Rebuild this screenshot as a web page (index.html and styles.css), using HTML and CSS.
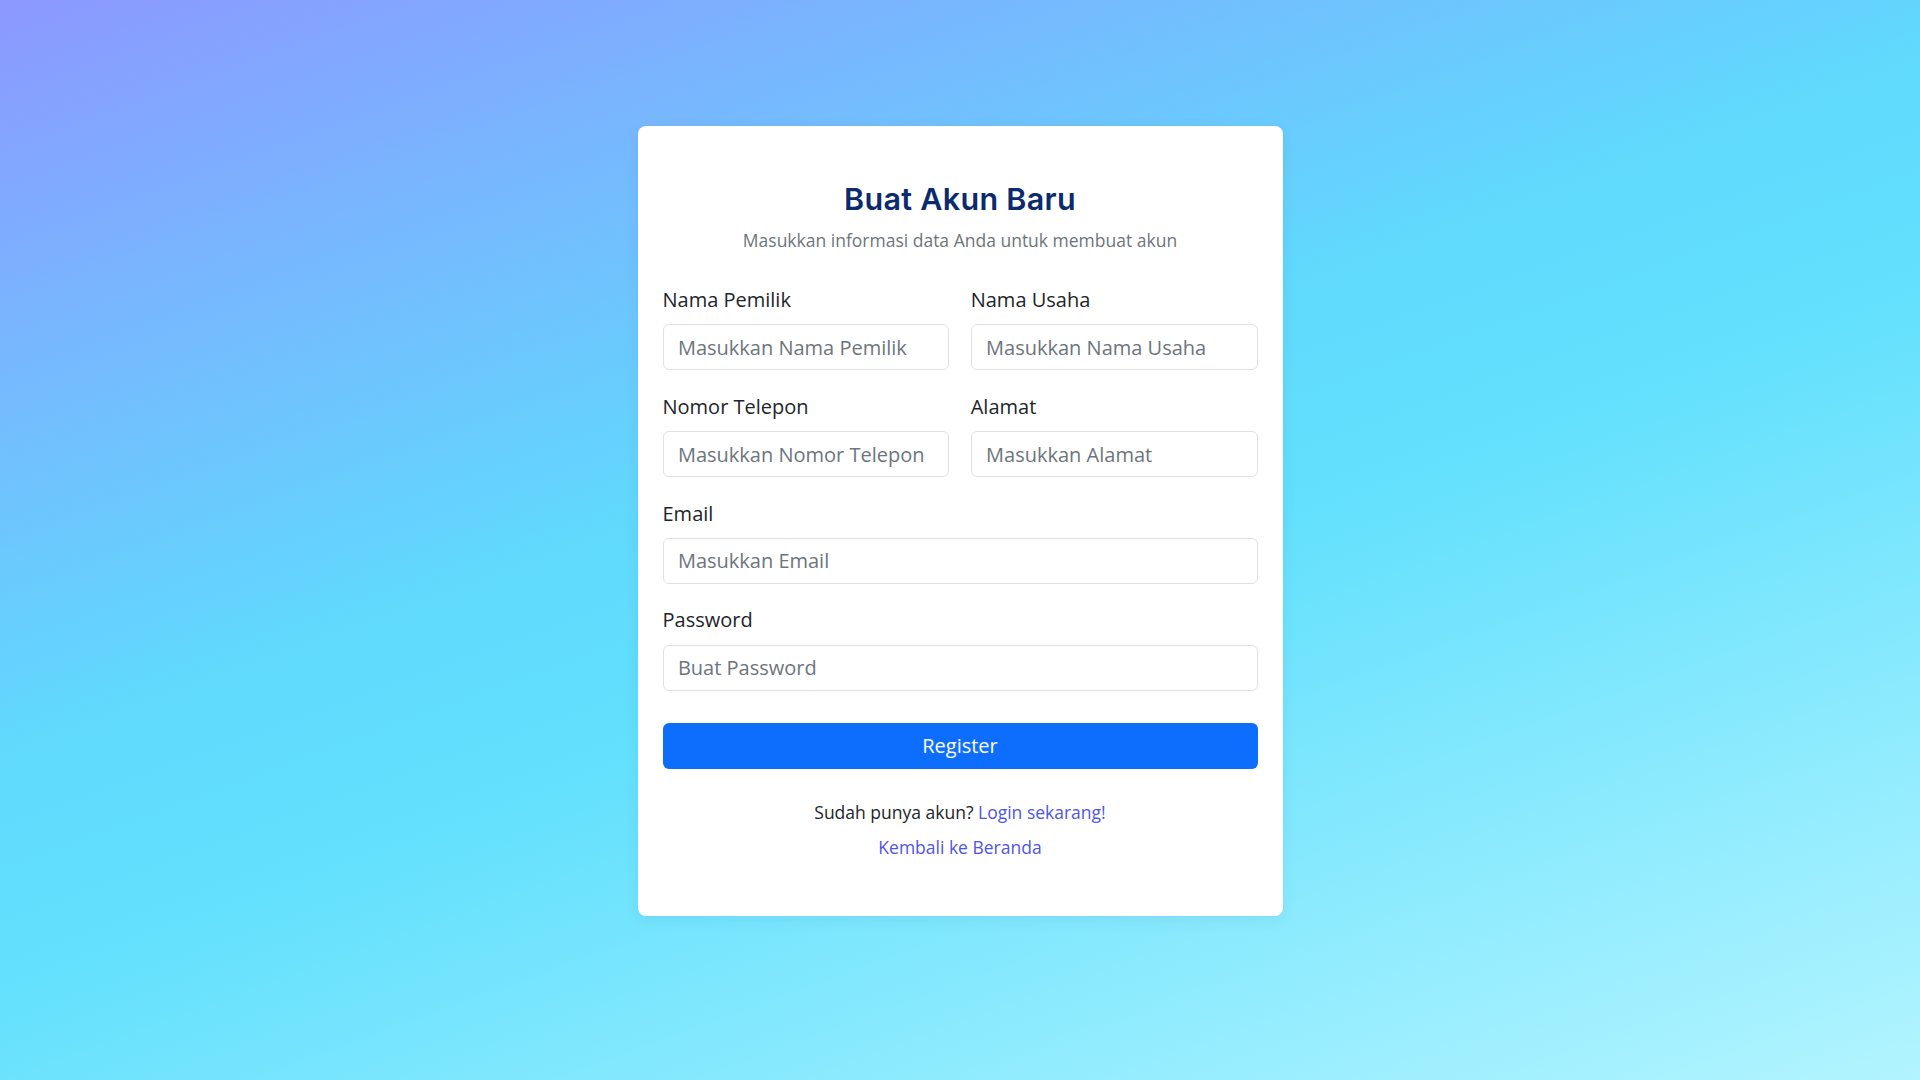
FILE: index.html
```html
<!DOCTYPE html>
<html lang="id">
<head>
<meta charset="utf-8">
<title>Buat Akun Baru</title>
<link rel="stylesheet" href="styles.css">
</head>
<body>
<main class="page">
  <section class="card">
    <h1 class="title">Buat Akun Baru</h1>
    <p class="subtitle">Masukkan informasi data Anda untuk membuat akun</p>
    <form class="form">
      <div class="grid">
        <div class="field">
          <label class="label">Nama Pemilik</label>
          <input class="input" type="text" placeholder="Masukkan Nama Pemilik">
        </div>
        <div class="field">
          <label class="label">Nama Usaha</label>
          <input class="input" type="text" placeholder="Masukkan Nama Usaha">
        </div>
        <div class="field">
          <label class="label">Nomor Telepon</label>
          <input class="input" type="text" placeholder="Masukkan Nomor Telepon">
        </div>
        <div class="field">
          <label class="label">Alamat</label>
          <input class="input" type="text" placeholder="Masukkan Alamat">
        </div>
      </div>
      <div class="field">
        <label class="label">Email</label>
        <input class="input" type="email" placeholder="Masukkan Email">
      </div>
      <div class="field field-last">
        <label class="label">Password</label>
        <input class="input" type="password" placeholder="Buat Password">
      </div>
      <button class="btn" type="button">Register</button>
    </form>
    <div class="footer">
      <p class="footer-line">Sudah punya akun? <a class="link" href="#">Login sekarang!</a></p>
      <p class="footer-line"><a class="link" href="#">Kembali ke Beranda</a></p>
    </div>
  </section>
</main>
</body>
</html>
```
FILE: styles.css
```css
html, body {
  margin: 0;
  padding: 0;
}
body {
  min-height: 100vh;
  font-family: "Open Sans", "Noto Sans", sans-serif;
  background: linear-gradient(160deg, #8c98ff 0%, #60d9fd 42%, #62e0fd 55%, #b2f4ff 100%);
  color: #212529;
}
.page {
  display: flex;
  justify-content: center;
  padding-top: 126px;
  min-height: 100vh;
  box-sizing: border-box;
}
.card {
  width: 645px;
  box-sizing: border-box;
  background: #ffffff;
  border-radius: 8px;
  padding: 56px 25px 55px;
  box-shadow: 0 4px 16px rgba(0, 40, 90, 0.06);
  align-self: flex-start;
}
.title {
  margin: 0 0 11px;
  font-family: "Inter", "Noto Sans", sans-serif;
  font-weight: 600;
  font-size: 30.5px;
  line-height: 34.6px;
  letter-spacing: 0.3px;
  color: #0b2b6e;
  text-align: center;
}
.subtitle {
  margin: 0 0 33px;
  font-size: 17.5px;
  line-height: 25.2px;
  color: #6c757d;
  text-align: center;
}
.form {
  margin: 0;
}
.grid {
  display: grid;
  grid-template-columns: 1fr 1fr;
  column-gap: 21.4px;
}
.field {
  margin-bottom: 22.5px;
}
.field-last {
  margin-bottom: 32px;
}
.label {
  display: block;
  font-size: 20px;
  line-height: 28.8px;
  margin-bottom: 9.6px;
  color: #212529;
}
.input {
  display: block;
  width: 100%;
  box-sizing: border-box;
  height: 46px;
  padding: 0 14.4px;
  border: 1px solid #dee2e6;
  border-radius: 6px;
  font-family: "Open Sans", "Noto Sans", sans-serif;
  font-size: 20px;
  color: #212529;
  background: #fff;
  outline: none;
}
.input::placeholder {
  color: #6c757d;
  opacity: 1;
}
.btn {
  display: block;
  width: 100%;
  height: 46px;
  border: none;
  border-radius: 6px;
  background: #0d6efd;
  color: #ffffff;
  font-family: "Open Sans", "Noto Sans", sans-serif;
  font-size: 20px;
  cursor: pointer;
}
.footer {
  margin-top: 31px;
  display: flex;
  flex-direction: column;
  gap: 10.4px;
  text-align: center;
}
.footer-line {
  margin: 0;
  font-size: 17.5px;
  line-height: 25.2px;
  color: #212529;
}
.link {
  color: #4f55e3;
  text-decoration: none;
}
```
